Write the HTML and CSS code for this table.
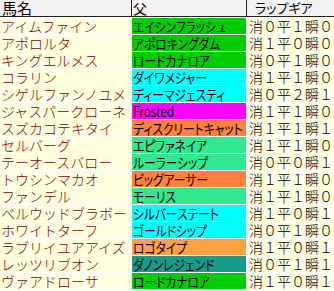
FILE: index.html
```html
<!DOCTYPE html>
<html lang="ja">
<head>
<meta charset="utf-8">
<title>ラップギア</title>
<link rel="stylesheet" href="styles.css">
</head>
<body>
<div class="sheet">
  <div class="head">
    <div class="hcell h-name">馬名</div>
    <div class="hcell h-sire">父</div>
    <div class="hcell h-gear">ラップギア</div>
  </div>
  <div class="body">
    <div class="name">アイムファイン</div><div class="sire green"><span class="narrow">エイシンフラッシュ</span></div><div class="gear">消０平１瞬０</div>
    <div class="name">アポロルタ</div><div class="sire green"><span class="narrow">アポロキングダム</span></div><div class="gear">消１平０瞬０</div>
    <div class="name">キングエルメス</div><div class="sire green"><span class="narrow">ロードカナロア</span></div><div class="gear">消０平１瞬０</div>
    <div class="name">コラリン</div><div class="sire cyan"><span class="narrow">ダイワメジャー</span></div><div class="gear">消１平１瞬０</div>
    <div class="name">シゲルファンノユメ</div><div class="sire cyan"><span class="narrow">ディーマジェスティ</span></div><div class="gear">消０平２瞬１</div>
    <div class="name">ジャスパークローネ</div><div class="sire magenta"><span class="narrow">Frosted</span></div><div class="gear">消１平１瞬０</div>
    <div class="name">スズカコテキタイ</div><div class="sire orange"><span class="narrow">ディスクリートキャット</span></div><div class="gear">消１平１瞬１</div>
    <div class="name">セルバーグ</div><div class="sire mint"><span class="narrow">エピファネイア</span></div><div class="gear">消１平１瞬０</div>
    <div class="name">テーオースバロー</div><div class="sire mint"><span class="narrow">ルーラーシップ</span></div><div class="gear">消０平０瞬１</div>
    <div class="name">トウシンマカオ</div><div class="sire orange"><span class="narrow">ビッグアーサー</span></div><div class="gear">消１平１瞬０</div>
    <div class="name">ファンデル</div><div class="sire mint"><span class="narrow">モーリス</span></div><div class="gear">消１平１瞬０</div>
    <div class="name">ベルウッドブラボー</div><div class="sire cyan"><span class="narrow">シルバーステート</span></div><div class="gear">消１平０瞬１</div>
    <div class="name">ホワイトターフ</div><div class="sire cyan"><span class="narrow">ゴールドシップ</span></div><div class="gear">消０平１瞬０</div>
    <div class="name">ラブリイユアアイズ</div><div class="sire light-orange"><span class="narrow">ロゴタイプ</span></div><div class="gear">消１平０瞬１</div>
    <div class="name">レッツリブオン</div><div class="sire teal"><span class="narrow">ダノンレジェンド</span></div><div class="gear">消０平１瞬１</div>
    <div class="name">ヴァアドローサ</div><div class="sire green"><span class="narrow">ロードカナロア</span></div><div class="gear">消１平０瞬１</div>
  </div>
</div>
</body>
</html>
```

FILE: styles.css
```css
html, body {
  margin: 0;
  padding: 0;
  background: #ffffff;
}

body {
  font-family: "Noto Sans CJK JP", "Noto Sans", sans-serif;
}

.sheet {
  width: 334px;
}

.head {
  display: grid;
  grid-template-columns: 131px 114px 87px;
  column-gap: 1px;
  background: #222222;
  border-bottom: 1px solid #222222;
}

.hcell {
  height: 16px;
  line-height: 16px;
  background: #f2f2f2;
  color: #000000;
  white-space: nowrap;
}

.h-name {
  font-size: 15px;
  padding-left: 2px;
}

.h-sire {
  font-size: 14px;
  padding-left: 1px;
}

.h-gear {
  font-size: 13px;
  padding-left: 8px;
  font-feature-settings: "palt";
}

.body {
  display: grid;
  grid-template-columns: 131px 114px 87px;
  grid-auto-rows: 16px;
  gap: 1px;
  padding: 1px 0;
  background: #ffffff;
}

.body > div {
  line-height: 16px;
  white-space: nowrap;
}

.name {
  background: #ffffe0;
  color: #880000;
  font-size: 14px;
  padding-left: 1px;
  font-weight: 300;
}

.sire {
  color: #000000;
  font-size: 14px;
  padding-left: 1px;
  font-feature-settings: "palt";
  font-weight: 400;
}

.narrow {
  display: inline-block;
  transform: scaleX(0.84);
  transform-origin: left center;
}

.gear {
  background: #ffffe0;
  color: #000000;
  font-size: 14px;
  padding-left: 2px;
  font-weight: 300;
}

.green { background: #00cc00; }
.cyan { background: #00ffff; }
.magenta { background: #ff00ff; }
.orange { background: #ff7f3f; }
.light-orange { background: #ffa040; }
.mint { background: #30e890; }
.teal { background: #1a9a8a; }
```
